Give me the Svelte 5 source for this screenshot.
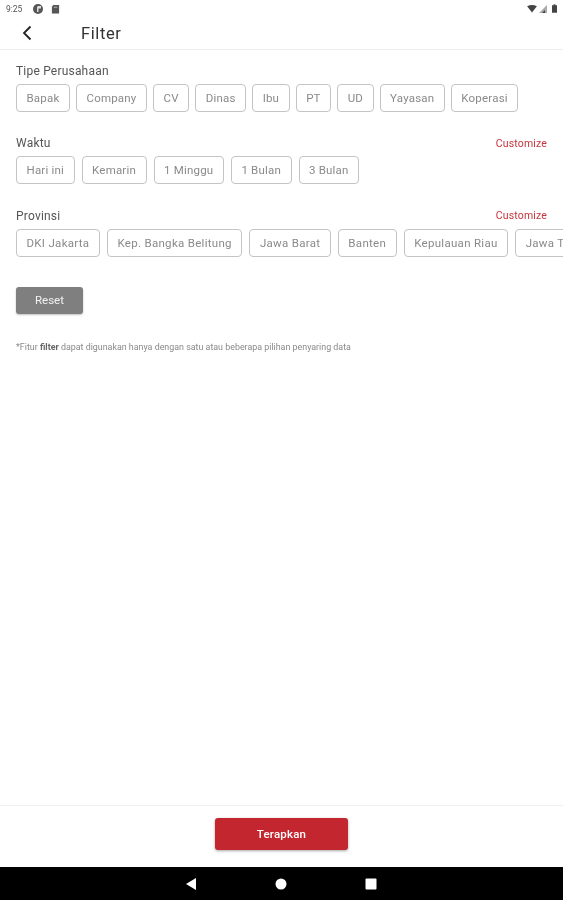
<script lang="ts">
	const groups = [
		{
			title: 'Tipe Perusahaan',
			slug: 'tipe',
			customize: false,
			items: ['Bapak', 'Company', 'CV', 'Dinas', 'Ibu', 'PT', 'UD', 'Yayasan', 'Koperasi']
		},
		{
			title: 'Waktu',
			slug: 'waktu',
			customize: true,
			items: ['Hari ini', 'Kemarin', '1 Minggu', '1 Bulan', '3 Bulan']
		},
		{
			title: 'Provinsi',
			slug: 'provinsi',
			customize: true,
			items: ['DKI Jakarta', 'Kep. Bangka Belitung', 'Jawa Barat', 'Banten', 'Kepulauan Riau', 'Jawa Timur']
		}
	];
</script>

<div class="page">
	<div class="status-bar">
		<div class="status-left">
			<span class="clock">9:25</span>
			<svg width="12" height="12" viewBox="0 0 12 12">
				<circle cx="6" cy="6" r="5" fill="#555" />
				<path d="M6 3h3v2.5H6.5V9H5V4z" fill="#ddd" />
			</svg>
			<svg width="9" height="10" viewBox="0 0 10 11">
				<path d="M2.5 1H9v9.5H1V3z" fill="#555" />
				<path d="M3 3h4v1H3z" fill="#bbb" />
			</svg>
		</div>
		<div class="status-right">
			<svg class="wifi" width="10" height="8" viewBox="0 0 11 9"><path d="M0 1.5Q5.5-1.5 11 1.5L5.5 8.5z" fill="#444" /></svg>
			<svg class="signal" width="8" height="8" viewBox="0 0 8 8"><path d="M0 8L8 0v8z" fill="#aaa" /><path d="M3 8l3-3v3z" fill="#444" /></svg>
			<svg width="5" height="9" viewBox="0 0 6 10"><path d="M2 0h2v1h2v9H0V1h2z" fill="#444" /></svg>
		</div>
	</div>

	<header class="app-bar">
		<svg class="back" width="12" height="16" viewBox="0 0 12 16">
			<path d="M9.5 1.5L3 8l6.5 6.5" fill="none" stroke="#222" stroke-width="1.8" />
		</svg>
		<h1>Filter</h1>
	</header>

	<main class="content">
		{#each groups as group}
			<section class="group">
				<div class="group-head">
					<span class="group-title">{group.title}</span>
					{#if group.customize}
						<span class="customize">Customize</span>
					{/if}
				</div>
				<div class="chips {group.slug}">
					{#each group.items as item}
						<span class="chip">{item}</span>
					{/each}
				</div>
			</section>
		{/each}

		<button class="reset">Reset</button>
		<p class="note">*Fitur <b>filter</b> dapat digunakan hanya dengan satu atau beberapa pilihan penyaring data</p>
	</main>

	<footer class="footer">
		<button class="apply">Terapkan</button>
	</footer>

	<nav class="nav-bar">
		<svg width="12" height="12" viewBox="0 0 12 12"><path d="M11 0v12L1 6z" fill="#fff" /></svg>
		<svg width="12" height="12" viewBox="0 0 12 12"><circle cx="6" cy="6" r="5.5" fill="#fff" /></svg>
		<svg width="12" height="12" viewBox="0 0 12 12"><rect x="0.5" y="0.5" width="11" height="11" rx="1" fill="#fff" /></svg>
	</nav>
</div>

<style>
	:global(body) {
		background: #fff;
	}

	/* the reference is an upscaled capture, so everything is slightly soft */
	.page {
		width: 563px;
		height: 900px;
		display: flex;
		flex-direction: column;
		overflow: hidden;
		font-family: Roboto, 'Liberation Sans', sans-serif;
		background: #fff;
		filter: blur(0.45px);
	}

	.status-bar {
		height: 17px;
		flex-shrink: 0;
		display: flex;
		align-items: center;
		justify-content: space-between;
		padding: 0 6px;
	}

	.status-left {
		display: flex;
		align-items: center;
		gap: 7px;
	}

	.status-right {
		display: flex;
		align-items: center;
	}

	.wifi {
		margin-right: 2px;
	}

	.signal {
		margin-right: 5px;
	}

	.clock {
		font-size: 8.5px;
		color: #555;
		width: 19px;
	}

	.app-bar {
		height: 32px;
		flex-shrink: 0;
		display: flex;
		align-items: center;
		border-bottom: 1px solid #eee;
	}

	.back {
		margin-left: 21px;
	}

	.app-bar h1 {
		margin: 0 0 0 48px;
		font-size: 16.5px;
		font-weight: 400;
		color: #333;
		letter-spacing: 0.6px;
	}

	.content {
		flex: 1;
		padding: 14px 0 0 16px;
	}

	.group {
		margin-bottom: 24.4px;
	}

	.group-head {
		display: flex;
		justify-content: space-between;
		align-items: center;
		height: 14px;
		padding-right: 16px;
		margin-bottom: 6px;
	}

	.group-title {
		font-size: 12px;
		letter-spacing: 0.2px;
		color: #555;
	}

	.customize {
		font-size: 10.5px;
		letter-spacing: 0.15px;
		color: #c4343e;
	}

	.chips {
		display: flex;
		gap: 7px;
		white-space: nowrap;
	}

	.chips.tipe {
		gap: 6px;
	}

	.chip {
		flex-shrink: 0;
		height: 28px;
		box-sizing: border-box;
		display: flex;
		align-items: center;
		padding: 0 9.5px;
		border: 1px solid #c4c4c4;
		border-radius: 4px;
		font-size: 11.5px;
		letter-spacing: 0.2px;
		color: #8a8a8a;
	}

	.chips.provinsi .chip {
		letter-spacing: 0.3px;
	}

	.reset {
		display: block;
		width: 67px;
		height: 27px;
		margin-top: 30px;
		padding: 0;
		border: 0;
		border-radius: 3px;
		background: #7f7f7f;
		color: #f2f2f2;
		font: 400 11.5px Roboto, 'Liberation Sans', sans-serif;
		box-shadow: 0 1px 2px rgba(0, 0, 0, 0.25);
	}

	.note {
		margin: 28px 0 0;
		font-size: 8.9px;
		color: #8a8a8a;
	}

	.note b {
		color: #666;
	}

	.footer {
		height: 62px;
		flex-shrink: 0;
		display: flex;
		justify-content: center;
		align-items: flex-start;
		box-sizing: border-box;
		padding-top: 12px;
		border-top: 1px solid #f0f0f0;
	}

	.apply {
		width: 133px;
		height: 32px;
		border: 0;
		border-radius: 3px;
		background: #c4262f;
		color: #fff;
		font: 500 11.5px Roboto, 'Liberation Sans', sans-serif;
		letter-spacing: 0.2px;
		box-shadow: 0 1px 3px rgba(0, 0, 0, 0.35);
	}

	.nav-bar {
		height: 33px;
		flex-shrink: 0;
		background: #000;
		display: flex;
		align-items: center;
		justify-content: center;
		gap: 78px;
		padding-right: 2px;
	}
</style>
